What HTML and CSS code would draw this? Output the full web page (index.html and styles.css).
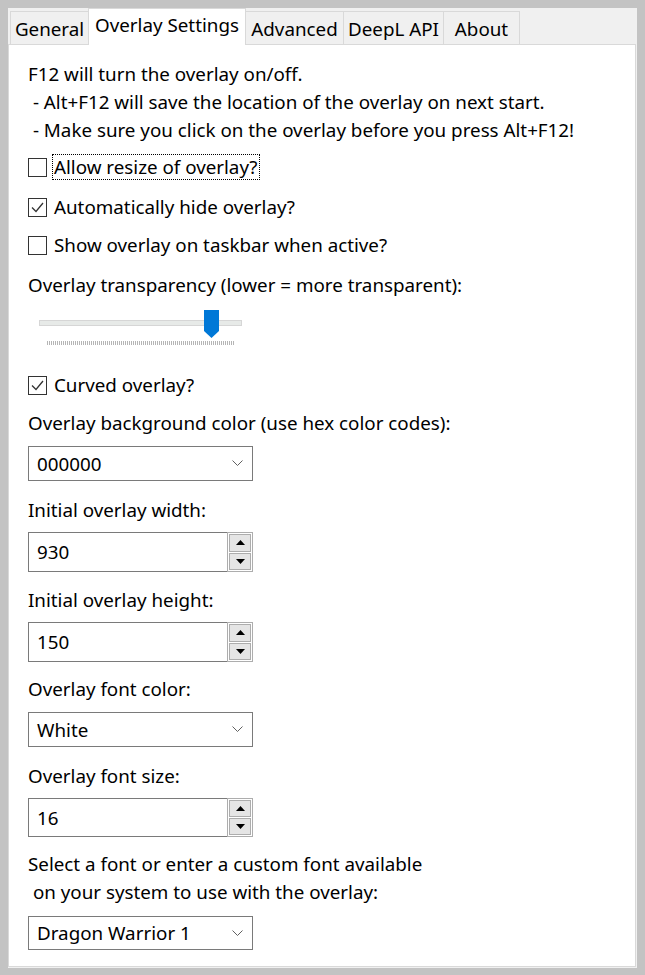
FILE: index.html
```html
<!DOCTYPE html>
<html>
<head>
<meta charset="utf-8">
<link rel="stylesheet" href="styles.css">
</head>
<body>
<div class="window">
  <div class="tabs">
    <div class="tab t-general">General</div>
    <div class="tab t-overlay active">Overlay Settings</div>
    <div class="tab t-adv">Advanced</div>
    <div class="tab t-deepl">DeepL API</div>
    <div class="tab t-about">About</div>
  </div>
  <div class="panel">
    <div class="line first">F12 will turn the overlay on/off.</div>
    <div class="line">&nbsp;- Alt+F12 will save the location of the overlay on next start.</div>
    <div class="line">&nbsp;- Make sure you click on the overlay before you press Alt+F12!</div>

    <div class="check c1"><span class="box"></span><span class="lbl focus">Allow resize of overlay?</span></div>
    <div class="check c2"><span class="box"><svg width="17" height="17" viewBox="0 0 17 17"><polyline points="3,8.5 7,12.5 14,4" fill="none" stroke="#333" stroke-width="1.3"/></svg></span><span class="lbl">Automatically hide overlay?</span></div>
    <div class="check c3"><span class="box"></span><span class="lbl">Show overlay on taskbar when active?</span></div>

    <div class="line m-label1">Overlay transparency (lower = more transparent):</div>
    <div class="slider">
      <div class="track"></div>
      <div class="thumb"><svg width="15" height="28" viewBox="0 0 15 28"><polygon points="0,0 15,0 15,21 7.5,28 0,21" fill="#0078d7"/></svg></div>
      <div class="ticks"></div>
    </div>

    <div class="check c4"><span class="box"><svg width="17" height="17" viewBox="0 0 17 17"><polyline points="3,8.5 7,12.5 14,4" fill="none" stroke="#333" stroke-width="1.3"/></svg></span><span class="lbl">Curved overlay?</span></div>

    <div class="line m11">Overlay background color (use hex color codes):</div>
    <div class="combo h35 m9"><span>000000</span><svg class="chev" width="11" height="7" viewBox="0 0 11 7"><polyline points="0.5,0.5 5.5,5.5 10.5,0.5" fill="none" stroke="#606060" stroke-width="1"/></svg></div>

    <div class="line m15">Initial overlay width:</div>
    <div class="num h40 m8"><div class="field">930</div><div class="spin"><div class="btn"><svg width="9" height="5" viewBox="0 0 9 5"><polygon points="0,5 9,5 4.5,0" fill="#000"/></svg></div><div class="btn"><svg width="9" height="5" viewBox="0 0 9 5"><polygon points="0,0 9,0 4.5,5" fill="#000"/></svg></div></div></div>

    <div class="line m14">Initial overlay height:</div>
    <div class="num h40 m8"><div class="field">150</div><div class="spin"><div class="btn"><svg width="9" height="5" viewBox="0 0 9 5"><polygon points="0,5 9,5 4.5,0" fill="#000"/></svg></div><div class="btn"><svg width="9" height="5" viewBox="0 0 9 5"><polygon points="0,0 9,0 4.5,5" fill="#000"/></svg></div></div></div>

    <div class="line m13">Overlay font color:</div>
    <div class="combo h35 m9"><span>White</span><svg class="chev" width="11" height="7" viewBox="0 0 11 7"><polyline points="0.5,0.5 5.5,5.5 10.5,0.5" fill="none" stroke="#606060" stroke-width="1"/></svg></div>

    <div class="line m15">Overlay font size:</div>
    <div class="num h39 m8"><div class="field">16</div><div class="spin"><div class="btn"><svg width="9" height="5" viewBox="0 0 9 5"><polygon points="0,5 9,5 4.5,0" fill="#000"/></svg></div><div class="btn"><svg width="9" height="5" viewBox="0 0 9 5"><polygon points="0,0 9,0 4.5,5" fill="#000"/></svg></div></div></div>

    <div class="line m13">Select a font or enter a custom font available</div>
    <div class="line">&nbsp;on your system to use with the overlay:</div>
    <div class="combo h34 m10"><span>Dragon Warrior 1</span><svg class="chev" width="11" height="7" viewBox="0 0 11 7"><polyline points="0.5,0.5 5.5,5.5 10.5,0.5" fill="none" stroke="#606060" stroke-width="1"/></svg></div>
  </div>
</div>
</body>
</html>
```
FILE: styles.css
```css
html, body {
  margin: 0;
  padding: 0;
  background: #c3c3c3;
}
body {
  font-family: "Noto Sans", "Open Sans", sans-serif;
  font-size: 18.8px;
  color: #000;
}
.window {
  margin: 8px 0 0 8px;
  width: 629px;
  height: 960px;
  background: #f0f0f0;
  display: flex;
  flex-direction: column;
}
.tabs {
  display: flex;
  align-items: flex-end;
  height: 36px;
  padding-left: 2px;
  position: relative;
  z-index: 1;
}
.tab {
  box-sizing: border-box;
  height: 33px;
  border: 1px solid #d9d9d9;
  border-bottom: none;
  background: #f0f0f0;
  display: flex;
  align-items: center;
  justify-content: center;
  line-height: 1;
  padding-top: 2px;
  margin-left: -1px;
  white-space: nowrap;
}
.tab:first-child { margin-left: 0; }
.tab.active {
  background: #fff;
  padding-top: 0;
  padding-bottom: 3px;
  margin-bottom: -1px;
  height: 37px;
  position: relative;
  z-index: 2;
}
.t-general { width: 79px; }
.t-overlay { width: 158px; }
.t-adv { width: 99px; }
.t-deepl { width: 101px; }
.t-about { width: 77px; }

.panel {
  box-sizing: border-box;
  width: 628px;
  height: 923px;
  background: #fff;
  border: 1px solid #d9d9d9;
  padding: 15px 0 0 19px;
}
.line {
  height: 28px;
  line-height: 28px;
  white-space: pre;
}
.m11 { margin-top: 11px; }
.m13 { margin-top: 13px; }
.m14 { margin-top: 14px; }
.m15 { margin-top: 15px; }
.m8 { margin-top: 8px; }
.m9 { margin-top: 9px; }
.m10 { margin-top: 10px; }
.m-label1 { margin-top: 13px; }

.check {
  display: flex;
  align-items: center;
  height: 26px;
}
.c1 { margin-top: 10px; }
.c2 { margin-top: 14px; }
.c3 { margin-top: 12px; }
.c4 { margin-top: 18px; }
.box {
  box-sizing: border-box;
  width: 19px;
  height: 19px;
  border: 1px solid #333;
  background: #fff;
  display: flex;
  align-items: center;
  justify-content: center;
  margin-right: 5px;
}
.box svg { display: block; }
.lbl {
  box-sizing: border-box;
  height: 26px;
  line-height: 24px;
  padding: 0 1px;
  border: 1px solid transparent;
}
.lbl.focus { border: 1px dotted #000; }

.slider {
  position: relative;
  height: 48px;
  margin-top: 7px;
}
.track {
  position: absolute;
  left: 11px;
  top: 14px;
  width: 203px;
  height: 6px;
  box-sizing: border-box;
  background: #e7eae8;
  border: 1px solid #d6d6d6;
}
.thumb {
  position: absolute;
  left: 176px;
  top: 4px;
  width: 15px;
  height: 28px;
}
.thumb svg { display: block; }
.ticks {
  position: absolute;
  left: 19px;
  top: 35px;
  width: 188px;
  height: 4px;
  background: repeating-linear-gradient(to right, #b5b5b5 0 1px, transparent 1px 2px);
}

.combo {
  box-sizing: border-box;
  width: 225px;
  border: 1px solid #7a7a7a;
  background: #fff;
  display: flex;
  align-items: center;
  justify-content: space-between;
  padding: 0 9px 0 8px;
}
.h35 { height: 35px; }
.h34 { height: 34px; }
.h40 { height: 40px; }
.h39 { height: 39px; }
.chev { display: block; }

.num {
  box-sizing: border-box;
  width: 225px;
  display: flex;
}
.field {
  box-sizing: border-box;
  flex: 1;
  border: 1px solid #7a7a7a;
  border-right: none;
  display: flex;
  align-items: center;
  padding-left: 8px;
}
.spin {
  box-sizing: border-box;
  width: 26px;
  border: 1px solid #adadad;
  padding: 1px;
  display: flex;
  flex-direction: column;
  gap: 1px;
  background: #fff;
}
.btn {
  flex: 1;
  box-sizing: border-box;
  border: 1px solid #adadad;
  background: #e5e5e5;
  display: flex;
  align-items: center;
  justify-content: center;
}
.btn svg { display: block; }
```
